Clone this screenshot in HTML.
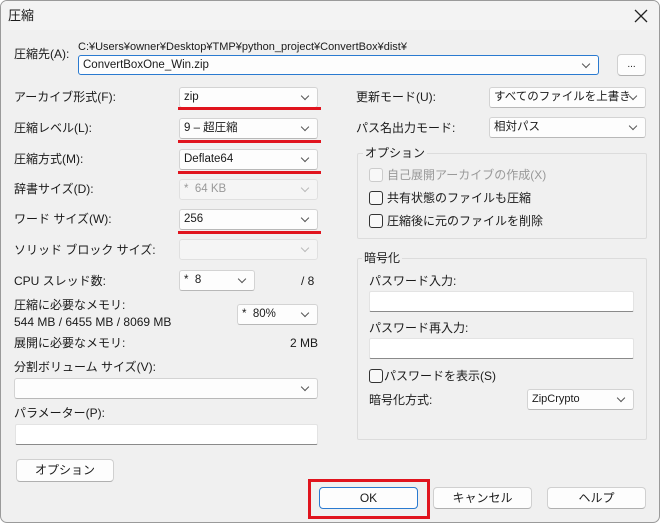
<!DOCTYPE html><html><head><meta charset="utf-8"><style>
*{box-sizing:border-box;margin:0;padding:0}
body{width:660px;height:523px;background:#fff;font-family:"Liberation Sans","Noto Sans CJK JP",sans-serif;font-size:12px;color:#1a1a1a;position:relative;overflow:hidden}
.win{position:absolute;left:0;top:0;width:660px;height:523px;background:#f0f0f0;border:1px solid #9a9a9a;border-radius:7px;overflow:hidden}
.tb{position:absolute;left:0;top:0;width:660px;height:29px;background:#f3f3f3}
.a{position:absolute;white-space:nowrap;line-height:14px}
.cb{position:absolute;height:21px;background:#fdfdfd;border:1px solid #d3d3d3;border-bottom-color:#b8b8b8;border-radius:3px;padding-left:4px;line-height:19px;font-size:11.5px;white-space:nowrap;overflow:hidden}
.cb:after{content:"";position:absolute;right:9px;top:5px;width:5px;height:5px;border-right:1px solid #555;border-bottom:1px solid #555;transform:rotate(45deg)}
.dis{background:#f5f5f5;color:#999;border-color:#e0e0e0}
.dis:after{border-color:#bbb}
.in{position:absolute;background:#fff;border:1px solid #e3e3e3;border-bottom:1px solid #8a8a8a;border-radius:2px}
.red{position:absolute;height:3px;background:#e0141e}
.chk{position:absolute;width:14px;height:14px;border:1px solid #333;border-radius:3px;background:#f8f8f8}
.btn{position:absolute;height:22px;background:#fdfdfd;border:1px solid #d0d0d0;border-bottom-color:#b0b0b0;border-radius:4px;text-align:center;line-height:20px}
.grp{position:absolute;border:1px solid #dcdcdc;border-radius:2px}
.lg{position:absolute;background:#f0f0f0;padding:0 2px;line-height:14px}
</style></head><body><div class="win">
<div class="tb"></div>
<div class="a" style="left:7px;top:8px;font-size:13px">圧縮</div>
<svg class="a" style="left:633px;top:8px" width="14" height="14"><path d="M1 1L13 13M13 1L1 13" stroke="#222" stroke-width="1.3"/></svg>

<div class="a" style="left:13px;top:46px">圧縮先(A):</div>
<div class="a" style="left:77px;top:39px;font-size:11px">C:¥Users¥owner¥Desktop¥TMP¥python_project¥ConvertBox¥dist¥</div>
<div class="cb" style="left:77px;top:54px;width:521px;height:20px;border-color:#2a7ad0;line-height:18px">ConvertBoxOne_Win.zip</div>
<div class="btn" style="left:616px;top:53px;width:29px;font-size:10px">...</div>

<div class="a" style="left:13px;top:89px">アーカイブ形式(F):</div>
<div class="a" style="left:13px;top:120px">圧縮レベル(L):</div>
<div class="a" style="left:13px;top:151px">圧縮方式(M):</div>
<div class="a" style="left:13px;top:181px">辞書サイズ(D):</div>
<div class="a" style="left:13px;top:211px">ワード サイズ(W):</div>
<div class="a" style="left:13px;top:242px">ソリッド ブロック サイズ:</div>
<div class="a" style="left:13px;top:273px">CPU スレッド数:</div>
<div class="a" style="left:13px;top:297px">圧縮に必要なメモリ:</div>
<div class="a" style="left:13px;top:314px">544 MB / 6455 MB / 8069 MB</div>
<div class="a" style="left:13px;top:335px">展開に必要なメモリ:</div>
<div class="a" style="left:289px;top:335px">2 MB</div>
<div class="a" style="left:300px;top:273px">/ 8</div>

<div class="cb" style="left:178px;top:86px;width:139px">zip</div>
<div class="red" style="left:177px;top:106px;width:143px"></div>
<div class="cb" style="left:178px;top:117px;width:139px">9 – 超圧縮</div>
<div class="red" style="left:177px;top:139px;width:143px"></div>
<div class="cb" style="left:178px;top:148px;width:139px">Deflate64</div>
<div class="red" style="left:177px;top:170px;width:143px"></div>
<div class="cb dis" style="left:178px;top:178px;width:139px">* &nbsp;64 KB</div>
<div class="cb" style="left:178px;top:208px;width:139px">256</div>
<div class="red" style="left:177px;top:230px;width:143px"></div>
<div class="cb dis" style="left:178px;top:238px;width:139px"></div>
<div class="cb" style="left:178px;top:269px;width:76px">* &nbsp;8</div>
<div class="cb" style="left:236px;top:303px;width:81px">* &nbsp;80%</div>

<div class="a" style="left:13px;top:359px">分割ボリューム サイズ(V):</div>
<div class="cb" style="left:13px;top:377px;width:304px"></div>
<div class="a" style="left:13px;top:405px">パラメーター(P):</div>
<div class="in" style="left:14px;top:423px;width:303px;height:21px"></div>
<div class="btn" style="left:15px;top:458px;width:98px;height:23px">オプション</div>

<div class="a" style="left:355px;top:89px">更新モード(U):</div>
<div class="cb" style="left:488px;top:86px;width:157px">すべてのファイルを上書き</div>
<div class="a" style="left:355px;top:120px">パス名出力モード:</div>
<div class="cb" style="left:488px;top:116px;width:157px">相対パス</div>

<div class="grp" style="left:356px;top:152px;width:290px;height:86px"></div>
<div class="lg" style="left:362px;top:145px">オプション</div>
<div class="chk" style="left:368px;top:167px;border-color:#ccc"></div><div class="a" style="left:386px;top:167px;color:#999">自己展開アーカイブの作成(X)</div>
<div class="chk" style="left:368px;top:190px"></div><div class="a" style="left:386px;top:190px">共有状態のファイルも圧縮</div>
<div class="chk" style="left:368px;top:213px"></div><div class="a" style="left:386px;top:213px">圧縮後に元のファイルを削除</div>

<div class="grp" style="left:356px;top:257px;width:290px;height:182px"></div>
<div class="lg" style="left:361px;top:250px">暗号化</div>
<div class="a" style="left:368px;top:273px">パスワード入力:</div>
<div class="in" style="left:368px;top:290px;width:265px;height:21px"></div>
<div class="a" style="left:368px;top:320px">パスワード再入力:</div>
<div class="in" style="left:368px;top:337px;width:265px;height:21px"></div>
<div class="chk" style="left:368px;top:368px"></div><div class="a" style="left:383px;top:368px">パスワードを表示(S)</div>
<div class="a" style="left:368px;top:392px">暗号化方式:</div>
<div class="cb" style="left:526px;top:388px;width:107px;font-size:11px">ZipCrypto</div>

<div style="position:absolute;left:307px;top:478px;width:122px;height:40px;border:3px solid #e0141e"></div>
<div class="btn" style="left:318px;top:486px;width:99px;border-color:#2a7ad0">OK</div>
<div class="btn" style="left:432px;top:486px;width:99px">キャンセル</div>
<div class="btn" style="left:546px;top:486px;width:99px">ヘルプ</div>
</div></body></html>
